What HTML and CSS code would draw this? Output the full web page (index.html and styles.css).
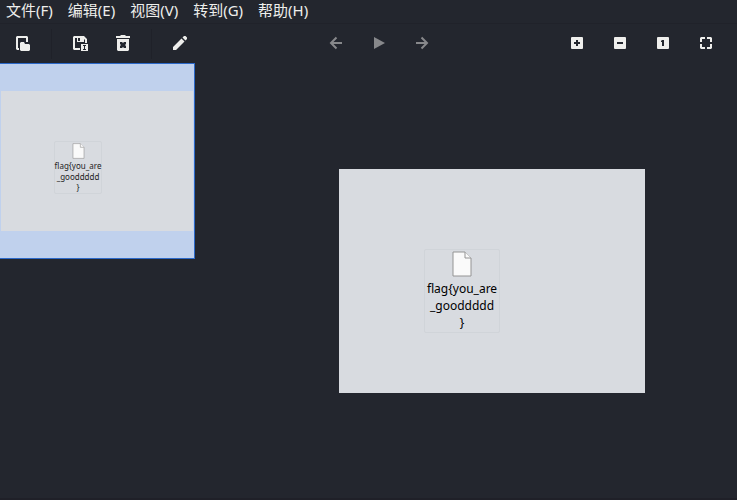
FILE: index.html
```html
<!DOCTYPE html>
<html lang="zh-CN">
<head>
  <meta charset="UTF-8">
  <title>flag.png</title>
  <link rel="stylesheet" href="styles.css">
</head>
<body>
  <nav class="menubar">
    <a href="#">文件(F)</a>
    <a href="#">编辑(E)</a>
    <a href="#">视图(V)</a>
    <a href="#">转到(G)</a>
    <a href="#">帮助(H)</a>
  </nav>

  <div class="toolbar">
    <div class="tool-group">
      <button class="tool" aria-label="打开">
        <svg viewBox="0 0 17 17"><path d="M2 1h10l1 1v5h-2V3H3v10h1v2H2l-1-1V2zM5 8l1-1h3l1 2h4l1 1v5l-1 1H6l-1-1z"/></svg>
      </button>
      <span class="separator"></span>
      <button class="tool" aria-label="另存为">
        <svg viewBox="0 0 17 17"><path fill-rule="evenodd" d="M2 1h10l3 3v4h-2V5l-1-1v3H5V3H3v10h5v2H2l-1-1V2zM6 3v3h2V3zM9 9h7v7H9zM11 10v1h1v3h-1v1h3v-1h-1v-3h1v-1z"/></svg>
      </button>
      <button class="tool" aria-label="删除">
        <svg viewBox="0 0 17 17"><path d="M1 1h4l1-1h4l1 1h4v2H1zM2 4h12v11l-1 1H3l-1-1z"/><path class="cut" d="M5 7h2l1 1 1-1h2v2l-1 1 1 1v2H9l-1-1-1 1H5v-2l1-1-1-1z"/></svg>
      </button>
      <span class="separator"></span>
      <button class="tool" aria-label="编辑">
        <svg viewBox="0 0 17 17"><path d="M1 12l8.500-8.500 3 3L4 15H1zM10.500 2.500L12 1h1.500L15 2.500V4l-1.500 1.500z"/></svg>
      </button>
    </div>

    <div class="tool-group">
      <button class="tool" aria-label="上一张" disabled>
        <svg viewBox="0 0 17 17"><path class="stroke" d="M14 8H4M8.500 2.500L3 8l5.500 5.500"/></svg>
      </button>
      <button class="tool" aria-label="播放" disabled>
        <svg viewBox="0 0 17 17"><path d="M3 2l11 6-11 6z"/></svg>
      </button>
      <button class="tool" aria-label="下一张" disabled>
        <svg viewBox="0 0 17 17"><path class="stroke" d="M2 8h10M7.500 2.500L13 8l-5.500 5.500"/></svg>
      </button>
    </div>

    <div class="tool-group">
      <button class="tool" aria-label="放大">
        <svg viewBox="0 0 17 17"><rect x="2" y="2" width="12" height="12" rx="1"/><path class="cut" d="M7 5h2v2h2v2H9v2H7V9H5V7h2z"/></svg>
      </button>
      <button class="tool" aria-label="缩小">
        <svg viewBox="0 0 17 17"><rect x="2" y="2" width="12" height="12" rx="1"/><path class="cut" d="M5 7h6v2H5z"/></svg>
      </button>
      <button class="tool" aria-label="原始大小">
        <svg viewBox="0 0 17 17"><rect x="2" y="2" width="12" height="12" rx="1"/><path class="cut" d="M7 5h2v6H7V7H6V6z"/></svg>
      </button>
      <button class="tool" aria-label="适合窗口">
        <svg viewBox="0 0 17 17"><path d="M2 3l1-1h4v2H4v3H2zM9 2h4l1 1v4h-2V4H9zM2 9h2v3h3v2H3l-1-1zM12 9h2v4l-1 1H9v-2h3z"/></svg>
      </button>
    </div>
  </div>

  <main class="content">
    <aside class="sidebar">
      <div class="thumbnail">
        <div class="picture picture-small">
          <div class="file">
            <svg class="file-icon" viewBox="0 0 20 26"><path d="M1 1h12l6 6v18H1z"/><path d="M13 1v6h6"/></svg>
            <span class="file-name">flag{you_are<br>_gooddddd<br>}</span>
          </div>
        </div>
      </div>
    </aside>
    <section class="viewer">
      <div class="picture">
        <div class="file">
          <svg class="file-icon" viewBox="0 0 20 26"><path d="M1 1h12l6 6v18H1z"/><path d="M13 1v6h6"/></svg>
          <span class="file-name">flag{you_are<br>_gooddddd<br>}</span>
        </div>
      </div>
    </section>
  </main>
  <footer class="statusbar"></footer>
</body>
</html>
```

FILE: styles.css
```css
* {
  box-sizing: border-box;
}

body {
  margin: 0;
  min-height: 100vh;
  display: flex;
  flex-direction: column;
  background: #23262e;
  color: #eeeeec;
  font-family: "Noto Sans", "Noto Sans CJK SC", sans-serif;
}

.menubar {
  display: flex;
  gap: 15px;
  height: 24px;
  padding: 0 6px;
  border-bottom: 1px solid #20222a;
  font-size: 15px;
  line-height: 20px;
}

.menubar a {
  color: inherit;
  text-decoration: none;
  white-space: nowrap;
}

.toolbar {
  display: flex;
  justify-content: space-between;
  height: 39px;
  padding: 0 9px 0 2px;
}

.tool-group {
  display: flex;
  align-items: center;
}

.tool {
  display: flex;
  align-items: center;
  justify-content: center;
  width: 43px;
  height: 39px;
  padding: 0;
  border: none;
  background: none;
  color: #eeeeec;
}

.tool:disabled {
  color: #87888b;
}

.tool svg {
  width: 17px;
  height: 17px;
  fill: currentColor;
}

.tool .cut {
  fill: #23262e;
}

.tool .stroke {
  fill: none;
  stroke: currentColor;
  stroke-width: 2;
}

.separator {
  width: 1px;
  height: 30px;
  margin: 0 7px 0 6px;
  background: #1f2129;
}

.content {
  flex: 1;
  display: flex;
}

.sidebar {
  width: 247px;
}

.thumbnail {
  display: flex;
  align-items: center;
  justify-content: center;
  width: 195px;
  height: 196px;
  border: 1px solid #2c69c9;
  border-left: none;
  background: #c0d1ed;
}

.viewer {
  flex: 1;
  display: flex;
  align-items: center;
  justify-content: center;
}

.picture {
  width: 306px;
  height: 224px;
  padding: 80px 0 0 85px;
  background: #d8dbe0;
}

.file {
  display: flex;
  flex-direction: column;
  align-items: center;
  width: 76px;
  height: 84px;
  padding-top: 1px;
  border: 1px solid #d0d4d9;
  border-radius: 2px;
  color: #000;
  font-family: "Noto Sans", sans-serif;
  font-size: 12px;
  line-height: 17px;
  text-align: center;
}

.file-icon {
  width: 20px;
  height: 26px;
  margin-bottom: 3px;
  fill: #fafafa;
  stroke: #949494;
}

.picture-small {
  width: 192px;
  height: 140px;
  padding: 50px 0 0 53px;
}

.picture-small .file {
  width: 48px;
  height: 53px;
  color: #222;
  font-size: 8px;
  line-height: 11px;
}

.picture-small .file-icon {
  width: 13px;
  height: 17px;
  margin-bottom: 1px;
}

.file-name {
  white-space: nowrap;
}

.statusbar {
  height: 2px;
  background: #1f2028;
}
```
